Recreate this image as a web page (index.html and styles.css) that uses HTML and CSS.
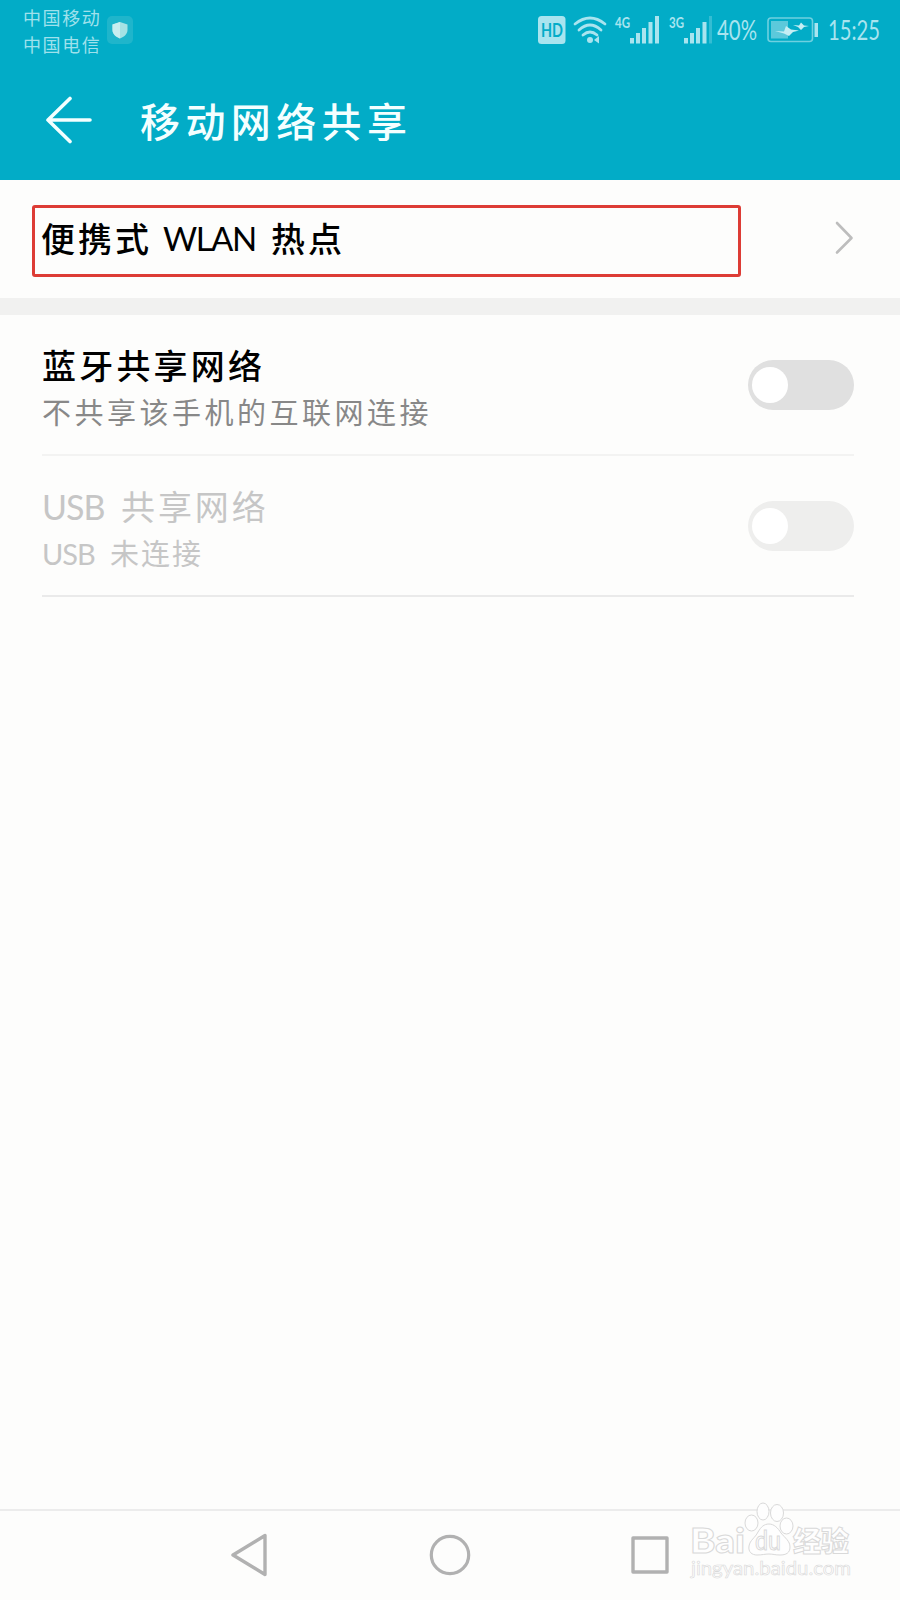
FILE: index.html
```html
<!DOCTYPE html>
<html lang="zh-CN">
<head>
    <meta charset="UTF-8">
    <meta name="viewport" content="width=device-width, initial-scale=1.0">
    <title>移动网络共享</title>
    <link rel="stylesheet" href="styles.css">
</head>
<body>
    <header class="header">
        <div class="status-bar">
            <div class="carriers">
                <div>中国移动</div>
                <div>中国电信</div>
            </div>
            <svg class="shield" width="26" height="28" viewBox="0 0 26 28">
                <rect width="26" height="28" rx="5" fill="#1fb5cb"/>
                <path d="M13 6 L20.500 8.500 V14 C20.500 18 17 21 13 22.500 C9 21 5.500 18 5.500 14 V8.500 Z" fill="#a5e2e4"/>
                <path d="M5.500 8.500 L13 6 V22.500 C9 21 5.500 18 5.500 14 Z" fill="#c9eef0"/>
            </svg>
            <svg class="status-icons" width="360" height="60" viewBox="0 0 360 60">
                <!-- HD -->
                <rect x="8" y="16" width="27.500" height="28" rx="3.500" fill="#a9e4ef"/>
                <text class="hd" x="11" y="36.500" textLength="22" lengthAdjust="spacingAndGlyphs">HD</text>
                <!-- wifi -->
                <g fill="none" stroke="#a9e4ef" stroke-width="2.800" stroke-linecap="round">
                    <path d="M45 24 Q60 12 75 24"/>
                    <path d="M49 30 Q60 20 71 30"/>
                    <path d="M53 35 Q60 29 67 35"/>
                </g>
                <circle cx="60" cy="40" r="3" fill="#a9e4ef"/>
                <path d="M64 40 L69 36 V43.500 Z" fill="#a9e4ef"/>
                <!-- signal 1 -->
                <text class="net" x="85" y="28" textLength="15" lengthAdjust="spacingAndGlyphs">4G</text>
                <g fill="#a9e4ef">
                    <rect x="100" y="38" width="4" height="5.500"/>
                    <rect x="106" y="33" width="4" height="10.500"/>
                    <rect x="112" y="28" width="4" height="15.500"/>
                    <rect x="118.500" y="22" width="4" height="21.500"/>
                    <rect x="125" y="16" width="4" height="27.500"/>
                </g>
                <!-- signal 2 -->
                <text class="net" x="139" y="28" textLength="15" lengthAdjust="spacingAndGlyphs">3G</text>
                <g fill="#a9e4ef">
                    <rect x="154" y="38" width="4" height="5.500"/>
                    <rect x="160" y="33" width="4" height="10.500"/>
                    <rect x="166" y="28" width="4" height="15.500"/>
                    <rect x="172.500" y="22" width="4" height="21.500"/>
                    <rect x="179" y="16" width="3" height="27.500" opacity="0.3"/>
                </g>
                <text class="num" x="187" y="40" textLength="40" lengthAdjust="spacingAndGlyphs">40%</text>
                <!-- battery -->
                <rect x="238" y="18" width="44.500" height="23.500" rx="3" fill="none" stroke="#6fd0e0" stroke-width="1.600"/>
                <rect x="241" y="21" width="17" height="17.500" fill="#5cc9db"/>
                <path d="M245 31 L254 31.500 L256 26 L261 29.500 L269 30.500 L263 32 L259 36 L254 33.500 Z" fill="#c5eef4"/>
                <path d="M263 25 L269 25.500 L271 22.500 L274 25.500 L279 26 L274 27 L271 30 L268 27 Z" fill="#c5eef4"/>
                <rect x="284.500" y="23" width="3.500" height="14" fill="#a9e4ef"/>
                <text class="num" x="298" y="40" textLength="52" lengthAdjust="spacingAndGlyphs">15:25</text>
            </svg>
        </div>
        <div class="title-bar">
            <svg width="48" height="48" viewBox="0 0 48 48" fill="none" stroke="#f4ffff" stroke-width="3.600" stroke-linecap="round" stroke-linejoin="round">
                <path d="M25 2.500 L3 24 L25 45.500 M3 24 H45"/>
            </svg>
            <h1 class="title">移动网络共享</h1>
        </div>
    </header>

    <main class="settings">
        <div class="row row-hotspot">
            <div class="highlight">便携式<span class="latin wlan">WLAN</span>热点</div>
            <svg width="20" height="36" viewBox="0 0 20 36" fill="none" stroke="#bdbdbd" stroke-width="2.600" stroke-linecap="round" stroke-linejoin="round">
                <path d="M3 3 L17.500 18 L3 32.500"/>
            </svg>
        </div>
        <div class="gap"></div>
        <div class="row row-bluetooth">
            <div class="labels">
                <div class="name">蓝牙共享网络</div>
                <div class="desc">不共享该手机的互联网连接</div>
            </div>
            <div class="switch"><div class="knob"></div></div>
        </div>
        <div class="row row-usb disabled">
            <div class="labels">
                <div class="name"><span class="latin usb">USB</span>共享网络</div>
                <div class="desc"><span class="latin usb-small">USB</span>未连接</div>
            </div>
            <div class="switch"><div class="knob"></div></div>
        </div>
    </main>

    <footer class="nav">
        <svg width="40" height="46" viewBox="0 0 40 46" fill="none" stroke="#b1b1b1" stroke-width="3.400" stroke-linejoin="round">
            <path d="M35 3.500 V42.500 L3 23 Z"/>
        </svg>
        <svg width="44" height="44" viewBox="0 0 44 44" fill="none" stroke="#b1b1b1" stroke-width="3.200">
            <circle cx="22" cy="22" r="18.700"/>
        </svg>
        <svg width="40" height="40" viewBox="0 0 40 40" fill="none" stroke="#b1b1b1" stroke-width="3.400" stroke-linejoin="round">
            <rect x="3" y="3" width="34" height="34"/>
        </svg>
    </footer>

    <svg class="watermark" width="170" height="84" viewBox="0 0 170 84">
        <g fill="#fefefe" stroke="#d9d9d9" stroke-width="1">
            <text class="wm-big" x="0" y="50" textLength="55" lengthAdjust="spacingAndGlyphs">Bai</text>
            <ellipse cx="61.500" cy="20" rx="6.500" ry="8"/>
            <ellipse cx="73" cy="8.500" rx="6" ry="8.500"/>
            <ellipse cx="87" cy="10" rx="6.500" ry="8.500"/>
            <ellipse cx="96.500" cy="23" rx="6.500" ry="8"/>
            <path d="M79 21 C84 21 88 25 91 30 C95 35 100 38 100 44 C100 50 96 52 90 52 C85 52 83 51 79 51 C75 51 72 52 67 52 C62 52 58 49 59 43 C60 37 65 35 68 29 C71 24 74 21 79 21 Z"/>
            <text class="wm-du" x="65" y="47" textLength="26" lengthAdjust="spacingAndGlyphs">du</text>
            <text class="wm-cn" x="103" y="49" textLength="56" lengthAdjust="spacingAndGlyphs">经验</text>
            <text class="wm-url" x="1" y="71.500" textLength="160" lengthAdjust="spacingAndGlyphs">jingyan.baidu.com</text>
        </g>
    </svg>
</body>
</html>
```
FILE: styles.css
```css
* { box-sizing: border-box; }
body { margin: 0; width: 900px; height: 1600px; position: relative; display: flex; flex-direction: column;
       background-color: #fdfdfc; font-family: "Lato", "Noto Sans CJK SC", sans-serif; overflow: hidden; }
svg { display: block; flex: none; }

.header { height: 180px; background-color: #02acc7; color: #f4ffff; }
.status-bar { height: 60px; display: flex; align-items: center; padding-left: 23px; padding-right: 10px; }
.carriers { width: 84px; padding-top: 4px; font-size: 18px; line-height: 27px; letter-spacing: 1.6px; color: #9fe1ec; white-space: nowrap; }
.status-icons { margin-left: auto; }
.status-icons text { font-family: "Lato", sans-serif; }
.status-icons .hd { font-size: 18px; font-weight: 700; fill: #04acc8; }
.status-icons .net { font-size: 15px; font-weight: 700; fill: #a9e4ef; }
.status-icons .num { font-size: 27px; fill: #a9e4ef; }

.title-bar { height: 120px; display: flex; align-items: center; padding-left: 45px; gap: 47px; }
.title { margin: 0; padding-top: 4px; font-size: 40px; line-height: 56px; font-weight: 500; letter-spacing: 5.400px; }

.settings { flex: 1; }
.row { display: flex; align-items: center; justify-content: space-between; padding-right: 46px; }
.row-hotspot { height: 118px; padding-left: 32px; }
.row-hotspot svg { margin-bottom: 2px; }
.highlight { width: 709px; height: 72px; margin-top: 3px; padding: 0 0 6px 6px; border: 3px solid #dd3c35; border-radius: 3px;
             display: flex; align-items: center; font-size: 34px; font-weight: 500; letter-spacing: 3px; color: #000; }
.gap { height: 17px; background-color: #f1f1f0; }
.row-bluetooth, .row-usb { height: 141px; margin-left: 42px; margin-right: 46px; padding-right: 0; border-bottom: 2px solid #f3f3f2; }
.row-usb { border-bottom-color: #eaeaea; }
.labels { padding-top: 8px; white-space: nowrap; }
.name { font-size: 34px; line-height: 48px; font-weight: 500; letter-spacing: 3.200px; color: #000; }
.desc { font-size: 29px; line-height: 46px; letter-spacing: 3.500px; color: #888; }
.disabled .name { font-weight: 400; letter-spacing: 2.900px; color: #c6c6c6; }
.disabled .desc { color: #c6c6c6; letter-spacing: 2px; }
.latin { display: inline-block; }
.latin.wlan { width: 108px; margin-left: 11px; font-weight: 400; font-size: 33px; letter-spacing: -1.500px; }
.disabled .latin.usb { width: 79px; letter-spacing: -1px; }
.disabled .latin.usb-small { width: 68px; letter-spacing: -1px; }

.switch { width: 106px; height: 50px; padding: 7px 4px; border-radius: 25px; background-color: #e0e0e0; }
.knob { width: 36px; height: 36px; border-radius: 50%; background-color: #fff; }
.disabled .switch { background-color: #eeeeed; }

.nav { height: 91px; border-top: 2px solid #ececec; display: flex; align-items: center; justify-content: space-between;
       padding: 0 230px 2px; }

.watermark { position: absolute; left: 690px; top: 1503px; overflow: visible; }
.watermark text { font-family: "Lato", "Noto Sans CJK SC", sans-serif; }
.watermark .wm-big { font-size: 35px; font-weight: 900; }
.watermark .wm-du { font-size: 26px; font-weight: 400; }
.watermark .wm-cn { font-size: 28px; font-weight: 900; }
.watermark .wm-url { font-size: 19px; stroke-width: 0.6; }
```
